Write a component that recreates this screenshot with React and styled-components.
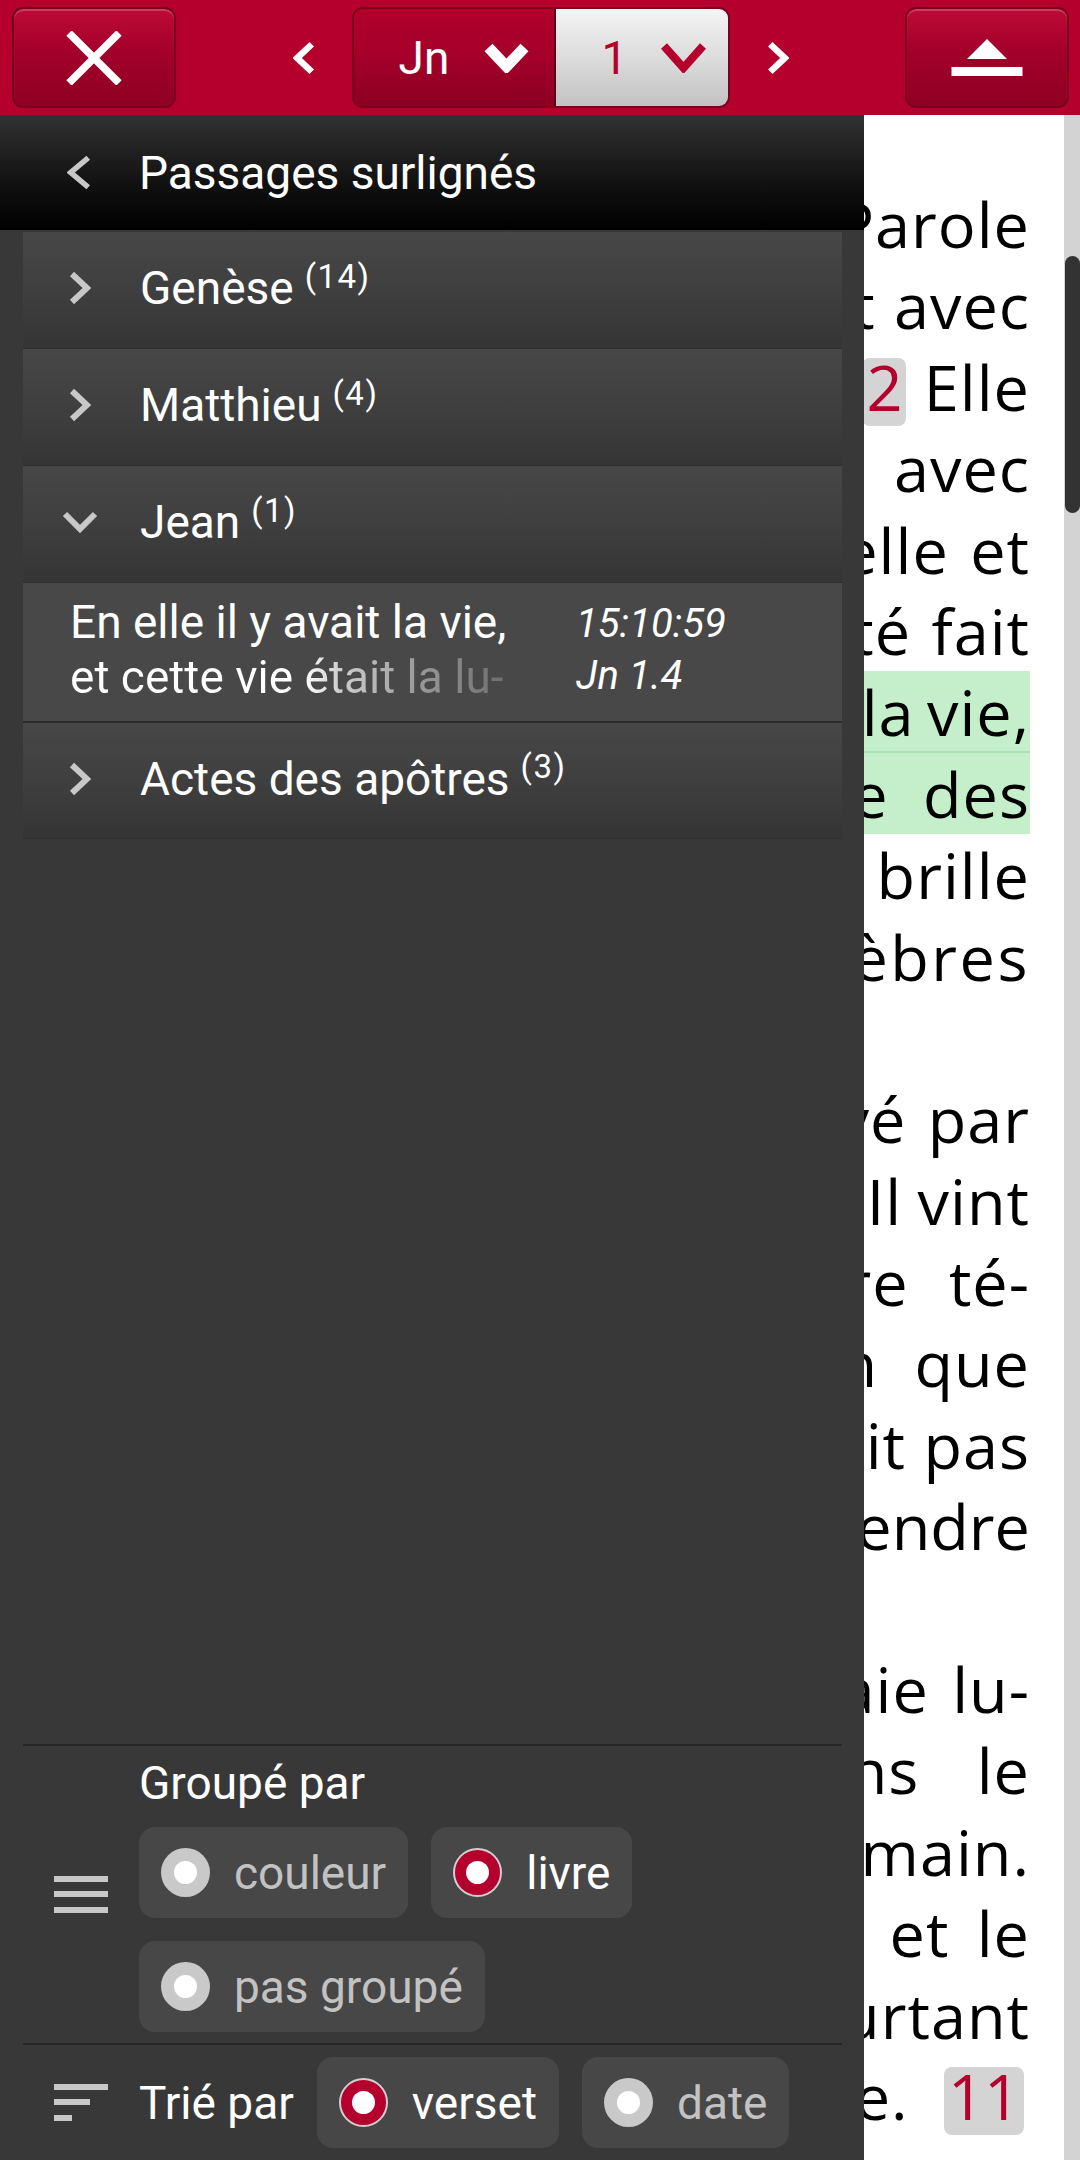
import React from "react";
import styled, { createGlobalStyle } from "styled-components";

// Global

const GlobalStyle = createGlobalStyle`
  html, body {
    margin: 0;
    padding: 0;
    background: #fff;
  }
  body {
    font-family: Roboto, "Noto Sans", sans-serif;
  }
  * {
    box-sizing: border-box;
  }
`;

const CRIMSON = "#b5002e";

// Page frame

const Screen = styled.div`
  position: relative;
  width: 1080px;
  height: 2160px;
  overflow: hidden;
  display: flex;
  flex-direction: column;
  background: #fff;
`;

// Top bar

const TopBar = styled.header`
  flex: none;
  height: 115px;
  background: ${CRIMSON};
  display: flex;
  align-items: center;
  justify-content: space-between;
  padding: 0 11px 0 12px;
`;

const BarButton = styled.button`
  width: 164px;
  height: 101px;
  border: 2px solid #7a001d;
  border-radius: 11px;
  background: linear-gradient(#bd0a36, #a2002a 45%, #8f0023);
  box-shadow: inset 0 2px 1px rgba(255, 255, 255, 0.22);
  display: flex;
  align-items: center;
  justify-content: center;
  padding: 0;
`;

const NavGroup = styled.div`
  display: flex;
  align-items: center;
  gap: 37px;
`;

const Segment = styled.div`
  display: flex;
  height: 101px;
  border: 2px solid #7a001d;
  border-radius: 11px;
  overflow: hidden;
`;

const SegPart = styled.div`
  display: flex;
  align-items: center;
  justify-content: space-between;
  width: ${p => p.$w}px;
  padding: ${p => p.$pad};
  font-size: 46px;
  color: ${p => (p.$light ? CRIMSON : "#fff")};
  background: ${p =>
    p.$light
      ? "linear-gradient(#f4f4f4, #dcdcdc 50%, #c2c2c2)"
      : "linear-gradient(#b3002d, #a3002a 50%, #8c0022)"};
  border-left: ${p => (p.$light ? "2px solid #5e0017" : "none")};
`;

// Reader (background content)

const Reader = styled.main`
  flex: 1;
  min-height: 0;
  display: flex;
`;

const TextColumn = styled.div`
  flex: 1;
  min-width: 0;
  overflow: hidden;
  padding: 68px 34px 0 30px;
  font-family: "Open Sans", "Noto Sans", sans-serif;
  font-size: 63px;
  letter-spacing: 1px;
  color: #000;
`;

const TextLine = styled.div`
  height: 81.4px;
  line-height: 81.4px;
  display: flex;
  justify-content: ${p => (p.$last ? "flex-start" : "flex-end")};
  white-space: pre;
  word-spacing: ${p => p.$ws || 0}px;
  letter-spacing: ${p => (p.$ls != null ? `${p.$ls}px` : "inherit")};
  background: ${p => (p.$hl ? "#c5efcb" : "transparent")};
  border-bottom: ${p => (p.$sep ? "2px solid #a6e2ae" : "none")};
`;

const LineText = styled.span`
  flex: none;
`;

const VerseNo = styled.span`
  display: inline-block;
  line-height: 58px;
  padding: 0 4px 10px;
  margin-right: ${p => (p.$end ? 6 : 0)}px;
  border-radius: 8px;
  background: #d4d4d4;
  color: ${CRIMSON};
  letter-spacing: 0;
  word-spacing: 0;
`;

const ScrollTrack = styled.div`
  flex: none;
  width: 16px;
  background: #d3d3d3;
  padding-top: 141px;
`;

const ScrollThumb = styled.div`
  margin-left: 1px;
  height: 257px;
  border-radius: 8px;
  background: #333;
`;

// Drawer

const Drawer = styled.aside`
  position: absolute;
  top: 115px;
  left: 0;
  bottom: 0;
  width: 864px;
  background: #383838;
  display: flex;
  flex-direction: column;
  color: #fff;
`;

const DrawerHeader = styled.div`
  flex: none;
  height: 115px;
  display: flex;
  align-items: center;
  gap: 48px;
  padding-left: 67px;
  background: linear-gradient(#323232, #111 60%, #000);
  font-size: 46px;
`;

const GroupList = styled.div`
  padding: 2px 22px 0 23px;
`;

const GroupRow = styled.div`
  height: ${p => p.$h || 117}px;
  display: flex;
  align-items: center;
  padding: 0 0 4px 27px;
  background: linear-gradient(#474747, #3f3f3f 50%, #353535);
  border-bottom: 1px solid #2e2e2e;
  font-size: 46px;
`;

const ChevronSlot = styled.div`
  width: 60px;
  margin-right: 30px;
  display: flex;
  justify-content: center;
`;

const Count = styled.span`
  position: relative;
  top: -12px;
  margin-left: 11px;
  font-size: 33px;
  letter-spacing: 1.5px;
`;

const Entry = styled.div`
  display: flex;
  padding: 12px 0 16px 47px;
  background: #484848;
  border-bottom: 2px solid #2c2c2c;
`;

const EntryText = styled.div`
  width: 476px;
  font-size: 46px;
  line-height: 55px;
`;

const TextRow = styled.span`
  display: block;
  white-space: nowrap;
`;

const FadedRow = styled.span`
  display: block;
  width: fit-content;
  white-space: nowrap;
  background: linear-gradient(to right, #fff 0, #fff 54%, #cfcfcf 62%, #9a9a9a 80%, #6f6f6f 100%);
  -webkit-background-clip: text;
  background-clip: text;
  color: transparent;
`;

const EntryMeta = styled.div`
  margin-left: 30px;
  padding-top: 3px;
  font-size: 40px;
  font-style: italic;
  line-height: 52px;
`;

const Footer = styled.div`
  margin: auto 22px 0 23px;
`;

const Section = styled.div`
  display: flex;
  align-items: center;
  border-top: 2px solid #262626;
  padding: ${p => p.$pad || "0"};
`;

const IconSlot = styled.div`
  flex: none;
  width: 116px;
  display: flex;
  justify-content: center;
`;

const SectionBody = styled.div`
  flex: 1;
  padding: 10px 0 11px;
`;

const SectionLabel = styled.div`
  font-size: 46px;
  line-height: 54px;
  margin-bottom: 17px;
`;

const InlineLabel = styled.span`
  font-size: 46px;
  margin-right: 23px;
`;

const ChipWrap = styled.div`
  display: flex;
  flex-wrap: wrap;
  gap: 23px 23px;
`;

const Chip = styled.div`
  height: 91px;
  display: inline-flex;
  align-items: center;
  gap: 24px;
  padding: 0 22px 0 22px;
  border-radius: 16px;
  background: #474747;
  font-size: 46px;
  color: ${p => (p.$on ? "#fff" : "#c2c2c2")};
`;

const Radio = styled.span`
  flex: none;
  width: 49px;
  height: 49px;
  border-radius: 50%;
  background: ${p => (p.$on ? CRIMSON : "#c9c9c9")};
  border: ${p => (p.$on ? "2px solid #cfcfcf" : "none")};
  display: flex;
  align-items: center;
  justify-content: center;

  &::after {
    content: "";
    width: 23px;
    height: 23px;
    border-radius: 50%;
    background: #fff;
  }
`;

// Icons

const CloseIcon = () => (
  <svg width="56" height="54" viewBox="0 0 56 54">
    <path d="M3 2 L53 52 M53 2 L3 52" stroke="#fff" strokeWidth="7.5" fill="none" />
  </svg>
);

const EjectIcon = () => (
  <svg width="72" height="38" viewBox="0 0 72 38">
    <polygon points="36,0 56,20 16,20" fill="#fff" />
    <rect x="0.5" y="28" width="71" height="9" fill="#fff" />
  </svg>
);

const Chevron = ({ dir = "right", color = "#c8c8c8", w = 22, h = 34, sw = 6 }) => {
  const pts = {
    right: `${sw / 2},${sw / 2} ${w - sw / 2 - 1},${h / 2} ${sw / 2},${h - sw / 2}`,
    left: `${w - sw / 2},${sw / 2} ${sw / 2 + 1},${h / 2} ${w - sw / 2},${h - sw / 2}`,
    down: `${sw / 2},${sw / 2} ${w / 2},${h - sw / 2 - 1} ${w - sw / 2},${sw / 2}`,
  }[dir];
  return (
    <svg width={w} height={h} viewBox={`0 0 ${w} ${h}`}>
      <polyline points={pts} fill="none" stroke={color} strokeWidth={sw} strokeLinejoin="miter" />
    </svg>
  );
};

const BarsIcon = ({ sort }) => (
  <svg width="54" height="37" viewBox="0 0 54 37">
    <rect x="0" y="0" width="54" height="6" fill="#c8c8c8" />
    <rect x="0" y="15" width={sort ? 36 : 54} height="6" fill="#c8c8c8" />
    <rect x="0" y="31" width={sort ? 18 : 54} height="6" fill="#c8c8c8" />
  </svg>
);

// Data

const lines = [
  { parts: ["Au commencement, la Parole"] },
  { parts: ["existait déjà. La Parole était avec"], ws: 1 },
  { parts: ["Dieu et la Parole était Dieu. ", { n: "2" }, " Elle"] },
  { parts: ["était au commencement avec"], ws: 38 },
  { parts: ["Dieu. ", { n: "3" }, " Tout a été fait par elle et"], ws: 4 },
  { parts: ["rien de ce qui a été fait n'a été fait"], ws: 3 },
  { parts: ["sans elle. ", { n: "4" }, " En elle il y avait la vie,"], hl: true, sep: true, ws: -5 },
  { parts: ["et cette vie était la lumière des"], hl: true, ws: 17 },
  { parts: ["hommes. ", { n: "5" }, " La lumière brille"], ws: -5 },
  { parts: ["dans les ténèbres, et les ténèbres"], ls: 2.5 },
  { parts: ["ne l'ont pas accueillie."], last: true },
  { parts: [{ n: "6" }, " Il y eut un homme envoyé par"], ws: 4 },
  { parts: ["Dieu: son nom était Jean. ", { n: "7" }, " Il vint"], ws: -2 },
  { parts: ["comme témoin, pour rendre té-"], ws: 23 },
  { parts: ["moignage à la lumière, afin que"], ws: 19 },
  { parts: ["tous croient par lui. ", { n: "8" }, " Il n'était pas"] },
  { parts: ["la lumière, mais il vint pour rendre"], ls: 0 },
  { parts: ["témoignage à la lumière."], last: true },
  { parts: [{ n: "9" }, " Cette lumière était la vraie lu-"], ws: 6 },
  { parts: ["mière qui, en venant dans le"], ws: 40 },
  { parts: ["monde, éclaire tout être humain."] },
  { parts: [{ n: "10" }, " Elle était dans le monde et le"], ws: 10 },
  { parts: ["monde a été fait par elle, pourtant"] },
  { parts: ["le monde ne l'a pas reconnue. ", { n: "11", end: true }], ws: 18 },
];

const groups = [
  { name: "Genèse", count: 14 },
  { name: "Matthieu", count: 4 },
  { name: "Jean", count: 1, open: true },
];

function App() {
  return (
    <Screen>
      <GlobalStyle />

      <TopBar>
        <BarButton aria-label="Fermer">
          <CloseIcon />
        </BarButton>

        <NavGroup>
          <Chevron dir="left" color="#fff" w={22} h={34} sw={6.5} />
          <Segment>
            <SegPart $w={200} $pad="0 24px 0 45px">
              Jn
              <Chevron dir="down" color="#fff" w={47} h={31} sw={11} />
            </SegPart>
            <SegPart $light $w={174} $pad="0 21px 0 46px">
              1
              <Chevron dir="down" color={CRIMSON} w={47} h={31} sw={8} />
            </SegPart>
          </Segment>
          <Chevron dir="right" color="#fff" w={22} h={34} sw={6.5} />
        </NavGroup>

        <BarButton aria-label="Éjecter">
          <EjectIcon />
        </BarButton>
      </TopBar>

      <Reader>
        <TextColumn>
          {lines.map((l, i) => (
            <TextLine key={i} $hl={l.hl} $sep={l.sep} $last={l.last} $ws={l.ws} $ls={l.ls}>
              <LineText>
                {l.parts.map((p, j) =>
                  typeof p === "string" ? (
                    p
                  ) : (
                    <VerseNo key={j} $end={p.end}>
                      {p.n}
                    </VerseNo>
                  )
                )}
              </LineText>
            </TextLine>
          ))}
        </TextColumn>
        <ScrollTrack>
          <ScrollThumb />
        </ScrollTrack>
      </Reader>

      <Drawer>
        <DrawerHeader>
          <Chevron dir="left" color="#c8c8c8" w={24} h={35} sw={5.5} />
          Passages surlignés
        </DrawerHeader>

        <GroupList>
          {groups.map(g => (
            <React.Fragment key={g.name}>
              <GroupRow>
                <ChevronSlot>
                  {g.open ? (
                    <Chevron dir="down" w={36} h={22} sw={6} />
                  ) : (
                    <Chevron dir="right" w={22} h={34} sw={6} />
                  )}
                </ChevronSlot>
                {g.name}
                <Count>({g.count})</Count>
              </GroupRow>
              {g.open && (
                <Entry>
                  <EntryText>
                    <TextRow>En elle il y avait la vie,</TextRow>
                    <FadedRow>et cette vie était la lu-</FadedRow>
                  </EntryText>
                  <EntryMeta>
                    15:10:59
                    <br />
                    Jn 1.4
                  </EntryMeta>
                </Entry>
              )}
            </React.Fragment>
          ))}
          <GroupRow $h={116}>
            <ChevronSlot>
              <Chevron dir="right" w={22} h={34} sw={6} />
            </ChevronSlot>
            Actes des apôtres
            <Count>(3)</Count>
          </GroupRow>
        </GroupList>

        <Footer>
          <Section>
            <IconSlot>
              <BarsIcon />
            </IconSlot>
            <SectionBody>
              <SectionLabel>Groupé par</SectionLabel>
              <ChipWrap>
                <Chip>
                  <Radio />
                  couleur
                </Chip>
                <Chip $on>
                  <Radio $on />
                  livre
                </Chip>
                <Chip>
                  <Radio />
                  pas groupé
                </Chip>
              </ChipWrap>
            </SectionBody>
          </Section>
          <Section $pad="12px 0">
            <IconSlot>
              <BarsIcon sort />
            </IconSlot>
            <InlineLabel>Trié par</InlineLabel>
            <ChipWrap>
              <Chip $on>
                <Radio $on />
                verset
              </Chip>
              <Chip>
                <Radio />
                date
              </Chip>
            </ChipWrap>
          </Section>
        </Footer>
      </Drawer>
    </Screen>
  );
}

export default App;
